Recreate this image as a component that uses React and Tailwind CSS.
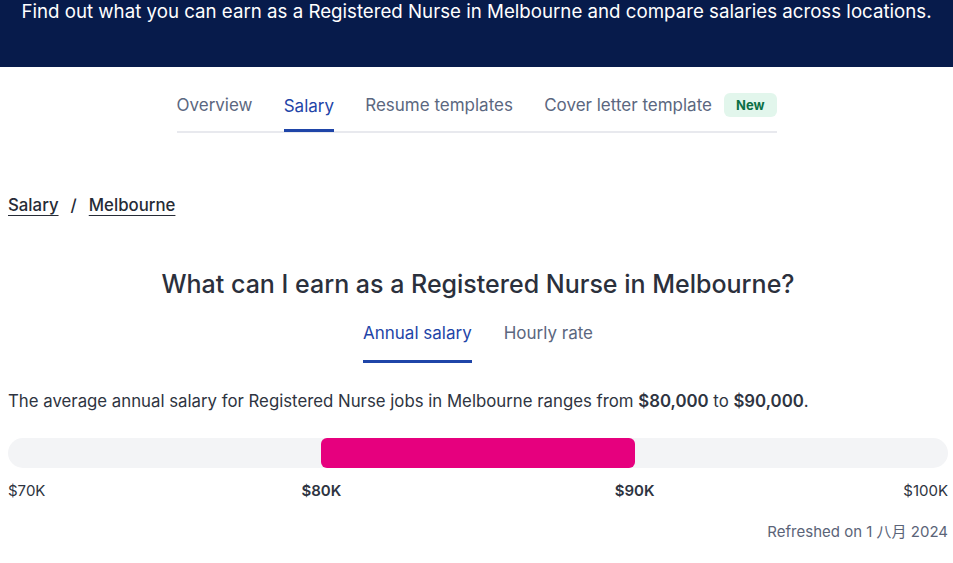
import React, { useState } from 'react';

const ranges = { min: 70, max: 100, low: 80, high: 90 };

const App = () => {
  const [tab, setTab] = useState('annual');
  const left = ((ranges.low - ranges.min) / (ranges.max - ranges.min)) * 100;
  const width = ((ranges.high - ranges.low) / (ranges.max - ranges.min)) * 100;

  return (
    <div className="min-h-screen bg-white text-[#2e3441]" style={{ fontFamily: 'Inter, "Noto Sans CJK SC", sans-serif' }}>
      <div className="h-[67px] bg-[#071b4b] text-white text-center text-[18.7px] leading-[24px] overflow-hidden">
        <p>Find out what you can earn as a Registered Nurse in Melbourne and compare salaries across locations.</p>
      </div>

      <nav className="w-[600px] mx-auto mt-[26px] flex items-center justify-between border-b-2 border-[#e8e9ee] text-[17px] leading-[24px] text-[#5b6780] whitespace-nowrap">
        <a className="pb-[14px]">Overview</a>
        <a className="pb-[11px] text-[#1f45a8] border-b-[3px] border-[#1f45a8] -mb-[2px]">Salary</a>
        <a className="pb-[14px]">Resume templates</a>
        <div className="flex items-center gap-3 pb-[14px]">
          <a>Cover letter template</a>
          <span className="px-3 leading-[24px] rounded-md bg-[#e2f6ec] text-[#0c6f45] text-[13px] font-bold">New</span>
        </div>
      </nav>

      <div className="pl-2 pr-[5px]">
        <div className="mt-[60px] flex items-center gap-3 text-[16.8px] font-medium text-[#262b36]">
          <a className="underline underline-offset-4">Salary</a>
          <span>/</span>
          <a className="underline underline-offset-4">Melbourne</a>
        </div>

        <h2 className="mt-[48px] text-center text-[25px] font-medium text-[#2b303c]">
          What can I earn as a Registered Nurse in Melbourne?
        </h2>

        <div className="mt-[17px] flex justify-center gap-8 text-[17px]">
          <button onClick={() => setTab('annual')} className={`pb-[14px] border-b-[3px] ${tab === 'annual' ? 'text-[#1f45a8] border-[#1f45a8]' : 'text-[#5b6780] border-transparent'}`}>Annual salary</button>
          <button onClick={() => setTab('hourly')} className={`pb-[14px] border-b-[3px] ${tab === 'hourly' ? 'text-[#1f45a8] border-[#1f45a8]' : 'text-[#5b6780] border-transparent'}`}>Hourly rate</button>
        </div>

        <p className="mt-[26px] text-[16.8px] text-[#2e3441]">
          The average annual salary for Registered Nurse jobs in Melbourne ranges from <b className="font-semibold">$80,000</b> to <b className="font-semibold">$90,000</b>.
        </p>

        <div className="relative mt-[24px] h-[30px] rounded-full bg-[#f3f4f6]">
          <div className="absolute top-0 h-full rounded-md bg-[#e6007e]" style={{ left: `${left}%`, width: `${width}%` }}></div>
        </div>

        <div className="relative mt-[12px] h-[20px] text-[15px]">
          <span className="absolute left-0">$70K</span>
          <span className="absolute -translate-x-1/2 font-semibold" style={{ left: `${left}%` }}>$80K</span>
          <span className="absolute -translate-x-1/2 font-semibold" style={{ left: `${left + width}%` }}>$90K</span>
          <span className="absolute right-0">$100K</span>
        </div>

        <p className="mt-[21px] text-right text-[15px] text-[#5b6478]">Refreshed on 1 八月 2024</p>
      </div>
    </div>
  );
};

export default App;
